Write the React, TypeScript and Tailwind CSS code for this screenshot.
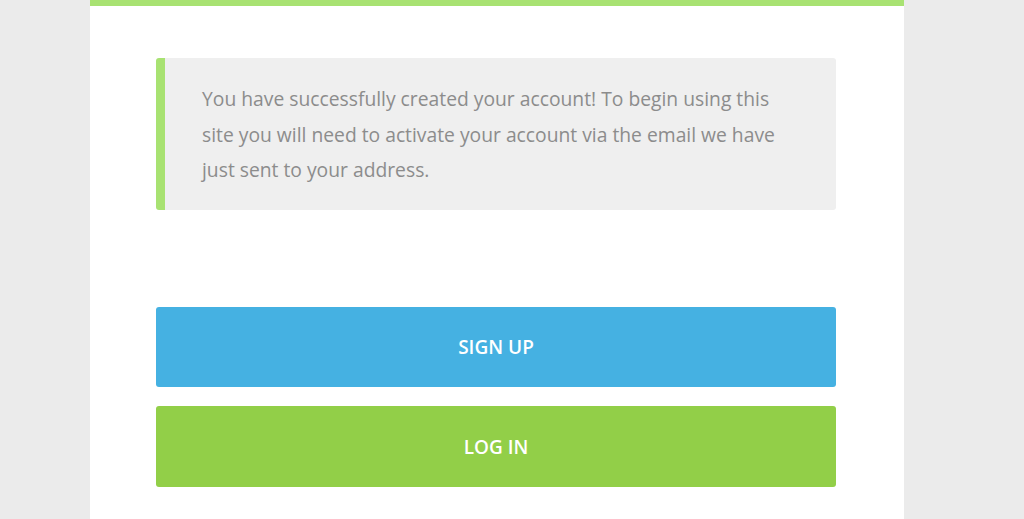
import React from 'react';

const App = () => {
    return (
        <div className="min-h-[519px] bg-[#ebebeb] font-['Open_Sans',sans-serif]">
            <div className="ml-[90px] w-[814px] min-h-[519px] bg-white border-t-[6px] border-[#a8e272]">
                <div className="pl-[66px] pr-[68px] pt-[52px] pb-8">
                    {/* activation notice */}
                    <div className="bg-[#efefef] border-l-[9px] border-[#a8e272] rounded-[3px] pl-[37px] pr-[38px] pt-[23px] pb-[22px]">
                        <p className="text-[19.3px] leading-[35.5px] text-[#8c8c8c]">
                            You have successfully created your account! To begin using this site you will need to activate your account via the email we have just sent to your address.
                        </p>
                    </div>

                    <div className="mt-[97px] flex flex-col gap-[19px]">
                        <button className="h-[80px] w-full pt-[2px] rounded-[3px] bg-[#45b1e2] text-white text-[19px] font-semibold uppercase">
                            Sign up
                        </button>
                        <button className="h-[81px] w-full pt-[2px] rounded-[3px] bg-[#92cf48] text-white text-[19px] font-semibold uppercase">
                            Log in
                        </button>
                    </div>
                </div>
            </div>
        </div>
    );
};

export default App;
